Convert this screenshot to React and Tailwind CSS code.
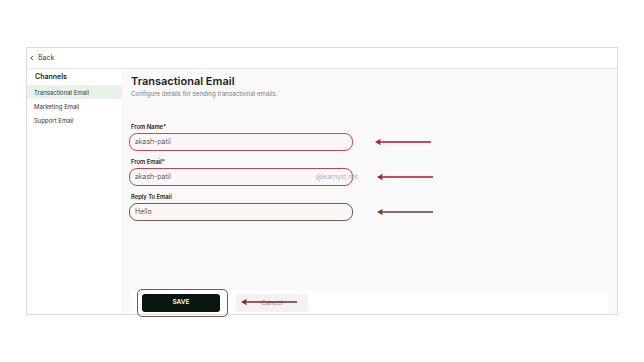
import React from "react";

function Arrow({ color, width = 56 }) {
  return (
    <svg width={width} height="8" viewBox={`0 0 ${width} 8`} className="block">
      <line x1="4" y1="4" x2={width} y2="4" stroke={color} strokeWidth="1.6" />
      <path d="M0 4 L6 0.8 L4.6 4 L6 7.2 Z" fill={color} />
    </svg>
  );
}

function Field({ label, value, suffix, border, arrowColor, arrowGap }) {
  return (
    <div className="flex flex-col">
      <div className="text-[5.8px] leading-[8px] font-semibold text-[#222] pl-[2px]">{label}</div>
      <div className="flex items-center mt-[2px]">
        <div
          className={`relative w-[224px] h-[18px] rounded-[8px] border-[1.5px] bg-[#fdf6f7] flex items-center pl-[5px] ${border}`}
        >
          <span className="text-[7px] font-light text-[#333]">{value}</span>
          {suffix && (
            <span className="absolute right-[-6px] top-[4px] text-[6.5px] leading-[9px] text-[#a9b1ba]">{suffix}</span>
          )}
        </div>
        <div className={arrowGap}>
          <Arrow color={arrowColor} />
        </div>
      </div>
    </div>
  );
}

export default function App() {
  return (
    <div
      className="w-[644px] h-[362px] bg-white pt-[47px] pl-[26px]"
      style={{ fontFamily: "Inter, 'Noto Sans', sans-serif" }}
    >
      <div className="w-[592px] h-[268px] border border-[#dcdcdc] flex flex-col">
        <div className="h-[21px] border-b border-[#e6e6e6] flex items-center pl-[2px] gap-[3px] text-[#444]">
          <svg width="6" height="6" viewBox="0 0 6 6">
            <path d="M3.8 1 L1.8 3 L3.8 5" fill="none" stroke="#333" strokeWidth="0.9" />
          </svg>
          <span className="text-[7px]">Back</span>
        </div>
        <div className="flex flex-1">
          <div className="w-[95px] bg-white pt-[3px]">
            <div className="text-[7px] leading-[10px] font-semibold text-[#222] pl-[8px]">Channels</div>
            <div className="mt-[3px] flex flex-col text-[6px] text-[#333]">
              <div className="h-[14px] bg-[#e7f3e8] flex items-center pl-[7px]">Transactional Email</div>
              <div className="h-[14px] flex items-center pl-[7px]">Marketing Email</div>
              <div className="h-[15px] flex items-center pl-[7px]">Support Email</div>
            </div>
          </div>
          <div className="flex-1 bg-[#f9f9f9] px-[9px] pt-[6px] flex flex-col">
            <div className="text-[11px] leading-[13px] font-semibold text-[#1f1f1f]">Transactional Email</div>
            <div className="text-[6.2px] leading-[9px] text-[#7a7a7a] mt-[1px]">
              Configure details for sending transactional emails.
            </div>
            <div className="mt-[25px] -ml-[2px] flex flex-col gap-[7px]">
              <Field
                label="From Name*"
                value="akash-patil"
                border="border-[#c94c5a]"
                arrowColor="#b3141c"
                arrowGap="ml-[22px]"
              />
              <Field
                label="From Email*"
                value="akash-patil"
                suffix="@learnyst.net"
                border="border-[#b94655]"
                arrowColor="#b3141c"
                arrowGap="ml-[24px]"
              />
              <Field
                label="Reply To Email"
                value="Hello"
                border="border-[#7d5a4a]"
                arrowColor="#6e3c20"
                arrowGap="ml-[24px]"
              />
            </div>
            <div className="mt-auto h-[23px] bg-white flex items-center pl-[11px] gap-[16px]">
              <div className="relative">
                <div className="absolute -left-[5px] -top-[5px] w-[91px] h-[28px] rounded-[5px] border border-[#7b5a48]" />
                <div className="w-[78px] h-[18px] rounded-[3px] bg-[#0a1510] flex items-center justify-center text-white text-[6.5px] font-semibold">
                  SAVE
                </div>
              </div>
              <div className="relative w-[72px] h-[18px] rounded-[3px] bg-[#f5f1f3] flex items-center justify-center text-[#8a8a8a] text-[6.5px] pt-[2px]">
                Cancel
                <div className="absolute left-[5px] top-[4px]">
                  <Arrow color="#7d2a22" />
                </div>
              </div>
            </div>
          </div>
        </div>
      </div>
    </div>
  );
}
